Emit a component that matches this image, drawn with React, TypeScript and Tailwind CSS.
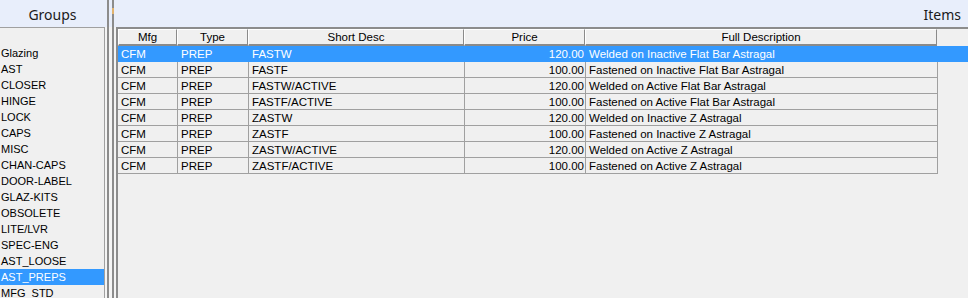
import React from "react"

const groups = [
  "Glazing",
  "AST",
  "CLOSER",
  "HINGE",
  "LOCK",
  "CAPS",
  "MISC",
  "CHAN-CAPS",
  "DOOR-LABEL",
  "GLAZ-KITS",
  "OBSOLETE",
  "LITE/LVR",
  "SPEC-ENG",
  "AST_LOOSE",
  "AST_PREPS",
  "MFG_STD",
]

const columns = [
  { label: "Mfg", w: "w-[59px]", right: false },
  { label: "Type", w: "w-[71px]", right: false },
  { label: "Short Desc", w: "w-[216px]", right: false },
  { label: "Price", w: "w-[121px]", right: true },
  { label: "Full Description", w: "w-[352px]", right: false },
]

const items = [
  ["CFM", "PREP", "FASTW", "120.00", "Welded on Inactive Flat Bar Astragal"],
  ["CFM", "PREP", "FASTF", "100.00", "Fastened on Inactive Flat Bar Astragal"],
  ["CFM", "PREP", "FASTW/ACTIVE", "120.00", "Welded on Active Flat Bar Astragal"],
  ["CFM", "PREP", "FASTF/ACTIVE", "100.00", "Fastened on Active Flat Bar Astragal"],
  ["CFM", "PREP", "ZASTW", "120.00", "Welded on Inactive Z Astragal"],
  ["CFM", "PREP", "ZASTF", "100.00", "Fastened on Inactive Z Astragal"],
  ["CFM", "PREP", "ZASTW/ACTIVE", "120.00", "Welded on Active Z Astragal"],
  ["CFM", "PREP", "ZASTF/ACTIVE", "100.00", "Fastened on Active Z Astragal"],
]

function Gap({ w }: { w: string }) {
  return (
    <div className={`flex flex-col ${w}`}>
      <div className="h-[27px] bg-[#e8eefb]" />
      <div className="flex-1 bg-[#f4f4f4]" />
    </div>
  )
}

export default function App() {
  return (
    <div className="flex h-[298px] w-[968px] flex-col overflow-hidden bg-[#f0f0f0] font-['Liberation_Sans',Arial,sans-serif] text-[11px] text-black">
      <div className="h-[2px] bg-[#9fd6f2]" />
      <div className="flex flex-1">
        {/* Groups panel */}
        <div className="flex w-[105px] shrink-0 flex-col">
          <div className="flex h-[27px] items-center justify-center bg-[#e8eefb] pt-[2px] font-['Noto_Sans',sans-serif] text-[14px] text-[#1a1a1a]">
            Groups
          </div>
          <div className="flex-1 border-t border-r border-[#a0a0a0] pt-[17px]">
            {groups.map((g) => (
              <div
                key={g}
                className={`flex h-[16px] items-center pl-[1px] ${g === "AST_PREPS" ? "bg-[#3399ff] text-white" : ""}`}
              >
                {g}
              </div>
            ))}
          </div>
        </div>

        {/* splitter */}
        <div className="flex shrink-0">
          <Gap w="w-[2px]" />
          <div className="w-[2px] bg-[#8c8c8c]" />
          <Gap w="w-[3px]" />
          <div className="flex w-[2px] flex-col bg-[#8c8c8c]">
            <div className="h-[8px]" />
            <div className="h-[6px] bg-[#e2b36e]" />
          </div>
          <Gap w="w-[2px]" />
        </div>

        {/* Items panel */}
        <div className="flex min-w-0 flex-1 flex-col">
          <div className="flex h-[27px] items-center justify-end bg-[#e8eefb] pt-[2px] pr-[7px] font-['Noto_Sans',sans-serif] text-[14px] text-[#1a1a1a]">
            Items
          </div>
          <div className="flex flex-1 flex-col border-t-2 border-l-2 border-[#8c8c8c] text-[11.5px]">
            <div className="flex h-[17px]">
              {columns.map((c) => (
                <div
                  key={c.label}
                  className={`${c.w} flex items-center justify-center border-t border-l border-r border-b-2 border-t-white border-l-white border-r-[#8a8a8a] border-b-[#8a8a8a] bg-[#f0f0f0] pt-[1px]`}
                >
                  {c.label}
                </div>
              ))}
            </div>
            {items.map((row, i) => {
              const sel = i === 0
              return (
                <div key={i} className={`flex h-[16px] ${sel ? "bg-[#3399ff] text-white" : ""}`}>
                  <div className={`flex ${sel ? "" : "border-r border-[#a0a0a0]"}`}>
                    {columns.map((c, j) => (
                      <div
                        key={c.label}
                        className={`${c.w} flex items-center overflow-hidden whitespace-nowrap border-b pt-[3px] ${sel ? "border-[#3399ff]" : "border-[#a0a0a0]"} ${
                          j > 0 ? (sel ? "border-l border-l-[#3399ff]" : "border-l border-l-[#a0a0a0]") : ""
                        } ${c.right ? "justify-end pr-[1px]" : "pl-[3px]"}`}
                      >
                        {row[j]}
                      </div>
                    ))}
                  </div>
                  <div className="flex-1" />
                </div>
              )
            })}
          </div>
        </div>
      </div>
    </div>
  )
}
